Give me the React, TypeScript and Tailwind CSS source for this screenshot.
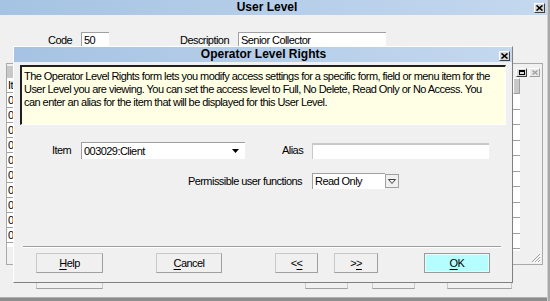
const CloseBox = ({ disabled }: { disabled?: boolean }) => (
  <div
    className={
      "w-[11px] h-[10px] flex items-center justify-center border border-t-white border-l-white border-b-[#404040] border-r-[#404040] " +
      (disabled ? "bg-[#e8e8e8]" : "bg-[#d8d8d8]")
    }
  >
    <svg width="7" height="6" viewBox="0 0 7 6">
      <path
        d="M0.5 0.5 L6.5 5.5 M6.5 0.5 L0.5 5.5"
        stroke={disabled ? "#a0a0a0" : "#000"}
        strokeWidth="1.6"
      />
    </svg>
  </div>
);

const WinButton = ({ children, w, ok }: { children: React.ReactNode; w: string; ok?: boolean }) => (
  <div
    className={
      "h-[20px] flex items-center justify-center border " +
      w +
      (ok
        ? " bg-[#b5fdff] border-[#9a9a9a] shadow-[inset_0_0_0_1px_#e6fbfb]"
        : " bg-[#f0f0f0] border-[#c8c8c8] border-b-[#a0a0a0] border-r-[#a0a0a0]")
    }
  >
    {children}
  </div>
);

const U = ({ children }: { children: React.ReactNode }) => (
  <span className="underline underline-offset-[2px]">{children}</span>
);

const gridRows = ["Item", "003029", "003030", "003031", "003032", "003033", "003034", "003035", "003036", "003037", "003038"];

export default function App() {
  return (
    <div className="relative w-[550px] h-[301px] overflow-hidden bg-[#f0f0f0] font-['Liberation_Sans',Arial,sans-serif] text-[11px] leading-[13px] tracking-[-0.55px] text-black">
      {/* background window: User Level */}
      <div className="flex h-full">
        <div className="flex flex-col w-[547px] h-full">
          <div className="h-[15px] flex items-center bg-gradient-to-r from-[#a6c3e3] to-[#c4d8ee]">
            <div className="flex-1 text-center font-bold text-[12px] tracking-normal leading-[15px]">User Level</div>
            <div className="pr-[2px]">
              <CloseBox />
            </div>
          </div>

          {/* code / description */}
          <div className="flex items-center h-[16px] mt-[17px]">
            <div className="w-[81px] pl-[48px]">Code</div>
            <div className="w-[28px] h-[16px] bg-white border-t border-l border-[#a0a0a0] pl-[2px] leading-[14px]">50</div>
            <div className="w-[129px] pl-[71px]">Description</div>
            <div className="w-[148px] h-[16px] bg-white border-t border-l border-[#a0a0a0] pl-[2px] leading-[14px]">Senior Collector</div>
          </div>

          {/* grid panel */}
          <div className="ml-[6px] mt-[15px] w-[537px] h-[202px] border border-[#a9a9a9] flex">
            <div className="w-[506px] flex flex-col pt-[2px]">
              <div className="h-[12px] w-[12px] bg-[#c8c8c8]" />
              <div className="w-[6px] h-[169px] bg-white overflow-hidden whitespace-nowrap">
                {gridRows.map((r) => (
                  <div key={r} className="h-[15px] border-b border-[#a0a0a0] pl-[1px] leading-[15px]">
                    {r}
                  </div>
                ))}
              </div>
            </div>
            <div className="flex-1 flex flex-col">
              <div className="flex justify-end gap-[2px] pt-[4px] pr-[2px] h-[14px]">
                <div className="w-[11px] h-[9px] border border-t-white border-l-white border-b-[#404040] border-r-[#404040] bg-[#d8d8d8] flex items-center justify-center">
                  <div className="w-[6px] h-[5px] border border-black border-t-2" />
                </div>
                <div className="w-[11px] h-[9px] border border-t-white border-l-white border-b-[#a0a0a0] border-r-[#a0a0a0] bg-[#e8e8e8] flex items-center justify-center">
                  <svg width="6" height="5" viewBox="0 0 6 5">
                    <path d="M0.5 0.5 L5.5 4.5 M5.5 0.5 L0.5 4.5" stroke="#a0a0a0" strokeWidth="1.4" />
                  </svg>
                </div>
              </div>
              <div className="w-[7px] flex flex-col">
                <div className="h-[16px] bg-[#c8c8c8] border border-t-white border-l-white border-b-[#a0a0a0] border-r-[#a0a0a0]" />
                <div className="h-[157px] bg-white overflow-hidden">
                  {Array.from({ length: 10 }).map((_, i) => (
                    <div key={i} className="h-[15.5px] border-b border-[#a0a0a0]" />
                  ))}
                </div>
              </div>
              <div className="flex-1 flex items-end justify-end pr-[1px] pb-[1px]">
                <svg width="10" height="10" viewBox="0 0 10 10">
                  <path d="M9 1 L1 9 M9 4 L4 9 M9 7 L7 9" stroke="#a0a0a0" strokeWidth="1" />
                  <path d="M10 2 L2 10 M10 5 L5 10 M10 8 L8 10" stroke="#ffffff" strokeWidth="1" />
                </svg>
              </div>
            </div>
          </div>

          {/* buttons of the background window (mostly hidden) */}
          <div className="flex items-center h-[20px] mt-[4px]">
            <div className="ml-[36px] w-[67px] h-[20px] border border-[#c8c8c8] border-b-[#a0a0a0] flex items-end justify-center pb-[5px]">
              <div className="w-[6px] h-[1px] bg-black" />
            </div>
            <div className="ml-[202px] w-[43px] h-[20px] border border-[#c8c8c8] border-b-[#a0a0a0]" />
            <div className="ml-[24px] w-[43px] h-[20px] border border-[#c8c8c8] border-b-[#a0a0a0]" />
            <div className="ml-[32px] w-[65px] h-[20px] border border-[#c8c8c8] border-b-[#a0a0a0]" />
          </div>

          <div className="flex-1" />
          <div className="h-[4px] bg-[#8c8c8c] border-t border-[#b0b0b0]" />
        </div>
        <div className="w-[3px] bg-[#a8a8a8] border-l border-[#d0d0d0]" />
      </div>

      {/* dialog: Operator Level Rights */}
      <div className="absolute left-[13px] top-[46px] w-[500px] h-[237px] border border-t-white border-l-white border-b-[#808080] border-r-[#808080] bg-[#f0f0f0] flex flex-col">
        <div className="h-[15px] flex items-center bg-gradient-to-r from-[#a6c3e3] to-[#c4d8ee]">
          <div className="flex-1 text-center font-bold text-[12px] tracking-normal leading-[15px] pl-[14px]">
            Operator Level Rights
          </div>
          <div className="pr-[2px] pt-[2px]">
            <CloseBox />
          </div>
        </div>

        <div className="ml-[6px] mt-[3px] w-[486px] h-[60px] bg-[#ffffe6] border-t-2 border-l-2 border-t-[#202020] border-l-[#202020] border-b border-r border-b-white border-r-white pl-[2px] pt-[3px]">
          The Operator Level Rights form lets you modify access settings for a specific form, field or menu item for the
          <br />
          User Level you are viewing. You can set the access level to Full, No Delete, Read Only or No Access. You
          <br />
          can enter an alias for the item that will be displayed for this User Level.
        </div>

        <div className="flex items-center h-[17px] mt-[17px]">
          <div className="w-[67px] pl-[38px]">Item</div>
          <div className="w-[164px] h-[17px] bg-white border-t border-l border-[#a0a0a0] flex items-center">
            <div className="flex-1 pl-[2px]">003029:Client</div>
            <svg width="7" height="4" viewBox="0 0 7 4" className="mr-[6px]">
              <path d="M0 0 L7 0 L3.5 4 Z" fill="#000" />
            </svg>
          </div>
          <div className="w-[67px] pl-[37px]">Alias</div>
          <div className="w-[177px] h-[16px] bg-white border-t-2 border-l border-[#c8c8c8]" />
        </div>

        <div className="flex items-center h-[16px] mt-[14px]">
          <div className="w-[298px] text-right pr-[10px]">Permissible user functions</div>
          <div className="w-[73px] h-[16px] bg-white border-t border-l border-[#a0a0a0] pl-[2px] leading-[14px]">Read Only</div>
          <div className="w-[14px] h-[14px] border border-[#a0a0a0] bg-[#f0f0f0] flex items-center justify-center">
            <svg width="8" height="5" viewBox="0 0 8 5">
              <path d="M0.5 0.5 L7.5 0.5 L4 4.5 Z" fill="none" stroke="#404040" strokeWidth="1" />
            </svg>
          </div>
        </div>

        <div className="ml-[9px] mt-[57px] w-[478px] h-[2px] border-t border-[#a0a0a0] border-b border-b-white" />

        <div className="flex items-center mt-[5px]">
          <div className="ml-[22px]">
            <WinButton w="w-[67px]">
              <U>H</U>elp
            </WinButton>
          </div>
          <div className="ml-[53px]">
            <WinButton w="w-[66px]">
              <U>C</U>ancel
            </WinButton>
          </div>
          <div className="ml-[53px]">
            <WinButton w="w-[43px]">
              &lt;<U>&lt;</U>
            </WinButton>
          </div>
          <div className="ml-[16px]">
            <WinButton w="w-[44px]">
              &gt;<U>&gt;</U>
            </WinButton>
          </div>
          <div className="ml-[46px]">
            <WinButton w="w-[66px]" ok>
              <U>O</U>K
            </WinButton>
          </div>
        </div>
      </div>
    </div>
  );
}
